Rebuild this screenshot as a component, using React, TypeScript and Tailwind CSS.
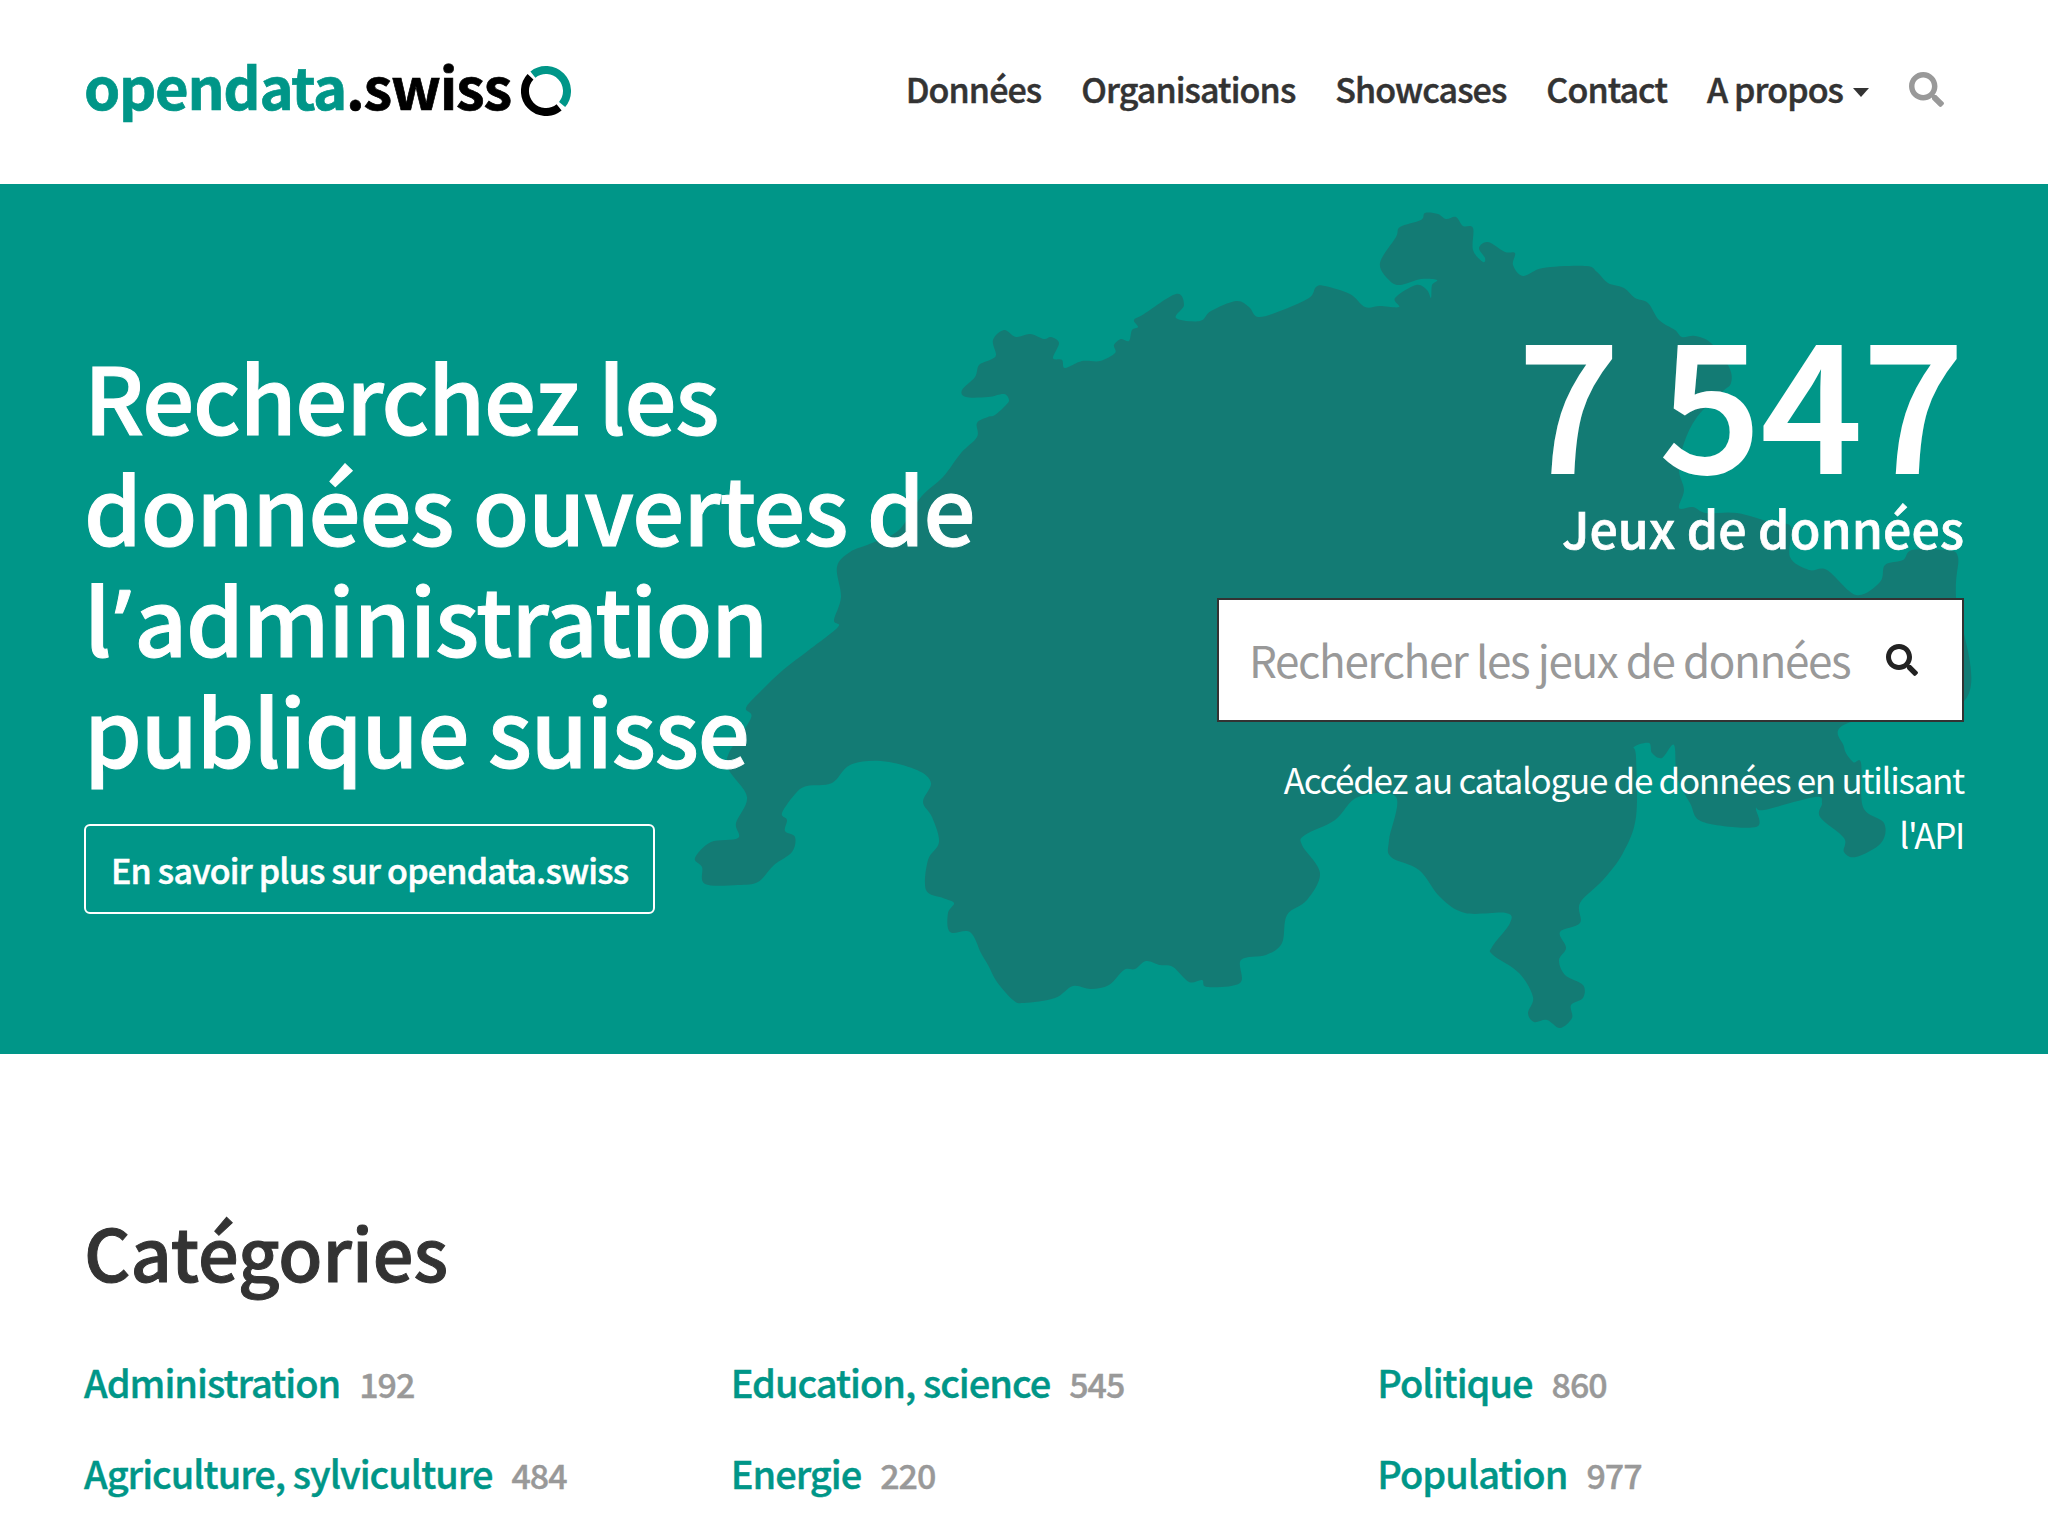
import { FaSearch } from "react-icons/fa";

// traced outline of Switzerland, in page coordinates
const mapPoints: [number, number][] = [
  [962, 390], [975, 377], [979, 365], [990, 360], [996, 355], [993, 340], [1004, 330], [1016, 337], [1030, 334],
  [1044, 339], [1051, 337], [1059, 343], [1053, 358], [1062, 360], [1065, 368], [1082, 361], [1100, 361], [1115, 353],
  [1114, 345], [1121, 339], [1129, 341], [1132, 330], [1138, 327], [1134, 320], [1144, 314], [1176, 294], [1184, 305],
  [1176, 318], [1200, 321], [1211, 311], [1236, 301], [1249, 307], [1258, 317], [1280, 311], [1309, 298], [1316, 287],
  [1325, 286], [1350, 294], [1365, 307], [1380, 306], [1399, 307], [1395, 298], [1416, 285], [1427, 290], [1431, 298],
  [1432, 285], [1437, 280], [1421, 279], [1400, 285], [1389, 280], [1380, 263], [1396, 237], [1400, 227], [1421, 220],
  [1425, 213], [1438, 214], [1446, 219], [1456, 217], [1463, 226], [1473, 228], [1473, 250], [1483, 262], [1485, 258],
  [1479, 248], [1488, 242], [1505, 252], [1515, 253], [1513, 265], [1523, 276], [1543, 268], [1586, 266], [1597, 272],
  [1608, 283], [1624, 288], [1635, 298], [1648, 303], [1659, 320], [1675, 330], [1682, 337], [1695, 336], [1711, 343],
  [1729, 367], [1731, 383], [1722, 392], [1697, 417], [1684, 443], [1679, 470], [1684, 490], [1679, 508], [1693, 507],
  [1706, 513], [1737, 513], [1773, 523], [1791, 527], [1790, 557], [1809, 570], [1827, 570], [1856, 595], [1880, 582],
  [1885, 565], [1903, 560], [1912, 550], [1945, 550], [1958, 557], [1956, 597], [1965, 700], [1848, 723], [1844, 747],
  [1853, 762], [1861, 763], [1863, 807], [1884, 823], [1881, 843], [1856, 857], [1844, 852], [1844, 838], [1820, 817],
  [1822, 803], [1815, 797], [1764, 810], [1756, 808], [1756, 827], [1703, 822], [1690, 803], [1677, 777], [1674, 745],
  [1662, 758], [1652, 753], [1649, 743], [1634, 747], [1636, 757], [1636, 817], [1623, 853], [1603, 880], [1580, 903],
  [1580, 923], [1560, 932], [1566, 948], [1559, 960], [1565, 975], [1583, 985], [1583, 998], [1571, 1005], [1572, 1018],
  [1560, 1028], [1547, 1020], [1534, 1022], [1528, 1013], [1533, 997], [1519, 973], [1493, 955], [1492, 947], [1510, 923],
  [1506, 913], [1465, 913], [1440, 897], [1419, 870], [1391, 857], [1389, 840], [1396, 797], [1358, 797], [1335, 820],
  [1305, 835], [1302, 845], [1320, 873], [1307, 900], [1287, 915], [1282, 943], [1266, 955], [1241, 960], [1240, 983],
  [1207, 987], [1202, 980], [1189, 982], [1173, 967], [1160, 965], [1146, 961], [1135, 969], [1124, 970], [1109, 985],
  [1091, 989], [1073, 986], [1055, 998], [1024, 1003], [1013, 1000], [997, 982], [988, 965], [981, 953], [970, 932],
  [950, 932], [948, 913], [954, 903], [943, 898], [926, 890], [928, 860], [939, 842], [932, 817], [923, 802], [931, 783],
  [917, 770], [881, 761], [850, 765], [832, 783], [807, 786], [796, 793], [782, 813], [787, 820], [785, 831], [795, 837],
  [792, 852], [774, 865], [758, 882], [738, 885], [705, 884], [702, 867], [695, 858], [711, 842], [738, 838], [736, 823],
  [747, 797], [729, 770], [729, 753], [751, 718], [746, 708], [760, 692], [783, 670], [809, 650], [838, 627], [834, 620],
  [841, 597], [837, 567], [850, 552], [872, 543], [899, 530], [921, 497], [943, 477], [961, 453], [977, 437], [977, 423],
  [988, 417], [995, 415], [1006, 405], [1009, 400], [1004, 394], [988, 397], [966, 397],
];

// catmull-rom through the points so the border stays round
function smoothPath(pts: [number, number][]) {
  const n = pts.length;
  let d = `M${pts[0][0]} ${pts[0][1]}`;
  for (let i = 0; i < n; i++) {
    const p0 = pts[(i - 1 + n) % n];
    const p1 = pts[i];
    const p2 = pts[(i + 1) % n];
    const p3 = pts[(i + 2) % n];
    const c1x = p1[0] + (p2[0] - p0[0]) / 6;
    const c1y = p1[1] + (p2[1] - p0[1]) / 6;
    const c2x = p2[0] - (p3[0] - p1[0]) / 6;
    const c2y = p2[1] - (p3[1] - p1[1]) / 6;
    d += `C${c1x.toFixed(1)} ${c1y.toFixed(1)} ${c2x.toFixed(1)} ${c2y.toFixed(1)} ${p2[0]} ${p2[1]}`;
  }
  return d + "Z";
}

const navItems = ["Données", "Organisations", "Showcases", "Contact"];

const categories = [
  [
    { name: "Administration", count: 192 },
    { name: "Agriculture, sylviculture", count: 484 },
  ],
  [
    { name: "Education, science", count: 545 },
    { name: "Energie", count: 220 },
  ],
  [
    { name: "Politique", count: 860 },
    { name: "Population", count: 977 },
  ],
];

function Logo() {
  return (
    <div className="flex items-center gap-[10px] mb-[2px]">
      <span className="text-[58px] leading-[70px] font-bold tracking-[-1.3px] [-webkit-text-stroke:0.7px] relative top-[-6px]">
        <span className="text-[#009688]">opendata</span>
        <span className="text-black">.swiss</span>
      </span>
      <svg width="50" height="50" viewBox="0 0 50 50" fill="none" strokeWidth="8">
        <path d="M11.9 8.6A21 21 0 0 1 41.1 38.5" stroke="#009688" />
        <path d="M38.1 41.4A21 21 0 0 1 9.5 10.8" stroke="#000" />
      </svg>
    </div>
  );
}

export default function App() {
  return (
    <div className="h-[1520px] overflow-hidden bg-white font-['Noto_Sans_CJK_SC','Liberation_Sans',sans-serif]">
      <header className="h-[184px] flex items-center justify-between pl-[84px] pr-[104px]">
        <Logo />
        <nav className="flex items-center gap-[40px] text-[34px] leading-[40px] font-medium tracking-[-0.9px] [-webkit-text-stroke:0.5px] text-[#333] mb-[6px]">
          {navItems.map((item) => (
            <a key={item}>{item}</a>
          ))}
          <a className="flex items-center gap-[10px]">
            A propos
            <svg width="16" height="9" viewBox="0 0 16 9" className="mt-[6px]">
              <path d="M0 0h16L8 9z" fill="#333" />
            </svg>
          </a>
          <FaSearch className="w-[35px] h-[35px] text-[#999] mt-[1px]" />
        </nav>
      </header>

      <section className="relative h-[870px] bg-[#009688] overflow-hidden">
        <svg className="absolute inset-0 w-full h-full" viewBox="0 184 2048 870">
          <path d={smoothPath(mapPoints)} fill="#137b74" />
        </svg>

        <div className="relative flex justify-between px-[84px]">
          <div className="pt-[155px]">
            <h1 className="text-[92px] leading-[111px] font-medium tracking-[-1.2px] [-webkit-text-stroke:1px] text-white w-[1000px]">
              Recherchez les
              <br />
              données ouvertes de
              <br />
              l<span className="font-['Noto_Sans'] leading-[0] px-[4px]">’</span>administration
              <br />
              publique suisse
            </h1>
            <a className="mt-[41px] flex w-fit items-center h-[90px] px-[25px] border-2 border-white rounded-[6px] text-[34px] font-medium tracking-[-0.8px] [-webkit-text-stroke:0.5px] text-white">
              En savoir plus sur opendata.swiss
            </a>
          </div>

          <div className="pt-[123px] w-[747px] text-right text-white">
            <div className="text-[178px] leading-[178px] font-medium [-webkit-text-stroke:2px]">7 547</div>
            <div className="text-[50px] leading-[52px] font-medium tracking-[0.1px] [-webkit-text-stroke:0.7px] mt-[16px]">Jeux de données</div>
            <div className="mt-[45px] h-[124px] flex items-center bg-white border-2 border-[#333] pl-[30px] pr-[44px]">
              <input
                className="flex-1 min-w-0 text-[44px] tracking-[-1.4px] text-[#333] outline-none placeholder:text-[#999] mt-[-2px]"
                placeholder="Rechercher les jeux de données"
                readOnly
              />
              <FaSearch className="w-[32px] h-[32px] text-[#222]" />
            </div>
            <p className="mt-[29px] text-[35px] leading-[55px] tracking-[-1.3px]">
              Accédez au catalogue de données en utilisant
              <br />
              l'API
            </p>
          </div>
        </div>
      </section>

      <section className="pt-[152px] px-[84px]">
        <h2 className="text-[72px] leading-[90px] font-medium [-webkit-text-stroke:1px] text-[#333]">Catégories</h2>
        <div className="mt-[66px] grid grid-cols-3 w-[1940px]">
          {categories.map((col, i) => (
            <div key={i} className="flex flex-col gap-[49px]">
              {col.map((cat) => (
                <div key={cat.name} className="flex items-baseline gap-[19px] leading-[40px]">
                  <a className="text-[38px] font-medium tracking-[-1px] [-webkit-text-stroke:0.4px] text-[#009688]">{cat.name}</a>
                  <span className="text-[34px] font-medium tracking-[-1px] [-webkit-text-stroke:0.4px] text-[#999]">{cat.count}</span>
                </div>
              ))}
            </div>
          ))}
        </div>
      </section>
    </div>
  );
}
